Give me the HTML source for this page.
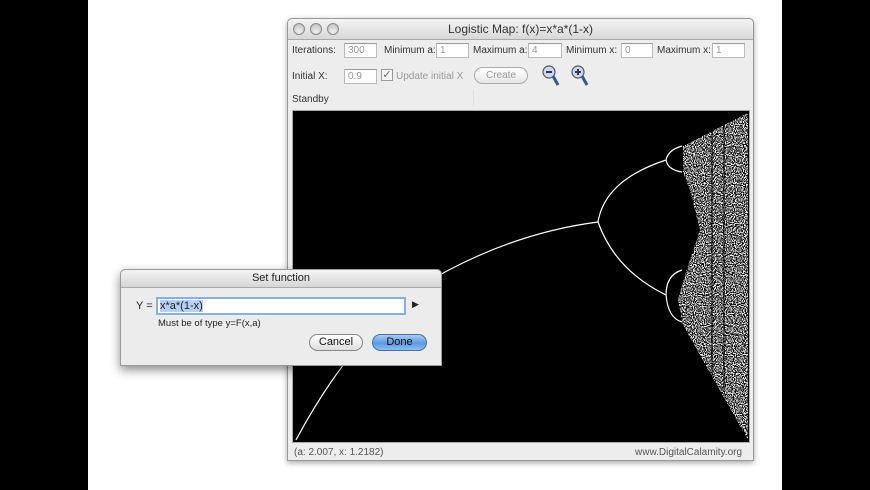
<!DOCTYPE html>
<html><head><meta charset="utf-8"><style>
*{margin:0;padding:0;box-sizing:border-box}
body{width:870px;height:490px;background:#fff;position:relative;overflow:hidden;font-family:"Liberation Sans",sans-serif;font-size:10px;color:#222}
.abs{position:absolute}
.lbl{position:absolute;font-size:10px;color:#333;white-space:nowrap}
.fld{position:absolute;height:15px;background:#fff;border:1px solid #bbb;border-top-color:#999;font-size:10px;color:#999;padding:1px 3px;line-height:12px}
.light{width:12px;height:12px;border-radius:50%;border:1px solid #8a8a8a;background:radial-gradient(circle at 50% 75%,#f2f2f2,#b8b8b8);position:absolute;top:4px}
</style></head><body>
<div class="abs" style="left:0;top:0;width:88px;height:490px;background:#000"></div>
<div class="abs" style="left:782px;top:0;width:88px;height:490px;background:#000"></div>

<div class="abs" style="left:287px;top:18px;width:467px;height:443px;background:#ededed;border:1px solid #999;border-radius:5px 5px 0 0;box-shadow:0 2px 6px rgba(0,0,0,.35)">
  <div class="abs" style="left:0;top:0;width:465px;height:21px;background:linear-gradient(#f4f4f4,#d8d8d8);border-bottom:1px solid #aaa;border-radius:5px 5px 0 0"></div>
  <div class="light" style="left:5px"></div><div class="light" style="left:22px"></div><div class="light" style="left:39px"></div>
  <div class="abs" style="left:0;top:3px;width:465px;text-align:center;font-size:12px;color:#333">Logistic Map: f(x)=x*a*(1-x)</div>
</div>
<div class="lbl" style="left:292px;top:45px">Iterations:</div>
<div class="fld" style="left:344px;top:43px;width:33px">300</div>
<div class="lbl" style="left:384px;top:45px">Minimum a:</div>
<div class="fld" style="left:436px;top:43px;width:33px">1</div>
<div class="lbl" style="left:473px;top:45px">Maximum a:</div>
<div class="fld" style="left:528px;top:43px;width:34px">4</div>
<div class="lbl" style="left:566px;top:45px">Minimum x:</div>
<div class="fld" style="left:621px;top:43px;width:32px">0</div>
<div class="lbl" style="left:657px;top:45px">Maximum x:</div>
<div class="fld" style="left:712px;top:43px;width:33px">1</div>

<div class="lbl" style="left:292px;top:71px">Initial X:</div>
<div class="fld" style="left:344px;top:69px;width:33px">0.9</div>
<div class="abs" style="left:381px;top:69px;width:12px;height:12px;border:1px solid #999;background:#f4f4f4;font-size:11px;line-height:10px;color:#666;text-align:center">✓</div>
<div class="lbl" style="left:396px;top:71px;color:#999">Update initial X</div>
<div class="abs" style="left:474px;top:67px;width:54px;height:17px;border:1px solid #aaa;border-radius:9px;background:linear-gradient(#fff,#e6e6e6);text-align:center;line-height:15px;color:#999">Create</div>
<svg class="abs" style="left:540px;top:64px" width="60" height="26">
 <circle cx="9" cy="8" r="6" fill="#cfd8e8" stroke="#556" stroke-width="1.2"/><rect x="6" y="7" width="6" height="2" fill="#336"/><line x1="13" y1="12" x2="18" y2="21" stroke="#345a8a" stroke-width="3"/>
 <circle cx="38" cy="8" r="6" fill="#cfd8e8" stroke="#556" stroke-width="1.2"/><rect x="35" y="7" width="6" height="2" fill="#336"/><rect x="37" y="5" width="2" height="6" fill="#336"/><line x1="42" y1="12" x2="47" y2="21" stroke="#345a8a" stroke-width="3"/>
</svg>
<div class="lbl" style="left:292px;top:94px">Standby</div>
<div class="abs" style="left:473px;top:90px;width:1px;height:16px;background:#ddd"></div>

<div class="abs" style="left:292px;top:110px;width:458px;height:333px;background:#000;border:1px solid #aaa"></div>
<svg class="abs" style="left:0;top:0" width="870" height="490">
 <defs>
  <filter id="n" x="0" y="0" width="1" height="1"><feTurbulence type="fractalNoise" baseFrequency="0.9" numOctaves="1" seed="3"/><feColorMatrix type="matrix" values="0 0 0 0 1 0 0 0 0 1 0 0 0 0 1 0 0 0 -7 3.9"/><feComposite in2="SourceGraphic" operator="in"/></filter>
 </defs>
 <g fill="none" stroke="#fff" stroke-width="1.2">
  <path d="M296,440 Q360,320 445,272 Q520,232 598,222"/>
  <path d="M598,222 Q605,180 666,160"/>
  <path d="M598,222 Q615,270 666,295"/>
  <path d="M666,160 Q668,150 682,146 M666,160 Q668,170 682,172"/>
  <path d="M666,295 Q666,275 682,270 M666,295 Q668,318 682,322"/>
 </g>
 <polygon points="683,146 748,113 748,440 683,325 678,300 685,275 700,230 690,190 683,172" fill="#fff" filter="url(#n)"/>
 <g stroke="#000" stroke-width="1.3" opacity=".8"><line x1="724" y1="125" x2="724" y2="390"/><line x1="712" y1="130" x2="712" y2="380"/></g>
</svg>
<div class="lbl" style="left:294px;top:447px;color:#555">(a: 2.007, x: 1.2182)</div>
<div class="lbl" style="left:635px;top:447px;color:#555">www.DigitalCalamity.org</div>

<div class="abs" style="left:120px;top:269px;width:322px;height:97px;background:#ececec;border:1px solid #999;border-radius:5px 5px 0 0;box-shadow:0 4px 10px rgba(0,0,0,.45)">
  <div class="abs" style="left:0;top:0;width:320px;height:18px;background:linear-gradient(#f4f4f4,#d6d6d6);border-bottom:1px solid #aaa;border-radius:5px 5px 0 0;text-align:center;font-size:11px;line-height:17px;color:#222">Set function</div>
</div>
<div class="lbl" style="left:136px;top:300px;font-size:11px;color:#222">Y =</div>
<div class="abs" style="left:156px;top:297px;width:250px;height:18px;border:2px solid #8ab0e0;background:#fff;padding:1px 2px;font-size:11px;line-height:13px"><span style="background:#b5d0f0">x*a*(1-x)</span></div>
<div class="lbl" style="left:412px;top:299px;font-size:9px;color:#222">▶</div>
<div class="lbl" style="left:158px;top:318px;font-size:9.5px;color:#222">Must be of type y=F(x,a)</div>
<div class="abs" style="left:309px;top:334px;width:54px;height:17px;border:1px solid #888;border-radius:9px;background:linear-gradient(#fff,#ddd);text-align:center;line-height:15px;font-size:11px;color:#111">Cancel</div>
<div class="abs" style="left:372px;top:334px;width:55px;height:17px;border:1px solid #4a6fa0;border-radius:9px;background:linear-gradient(#a9cbf0,#5d9ae0 55%,#8cc0f2);text-align:center;line-height:15px;font-size:11px;color:#111">Done</div>
</body></html>
